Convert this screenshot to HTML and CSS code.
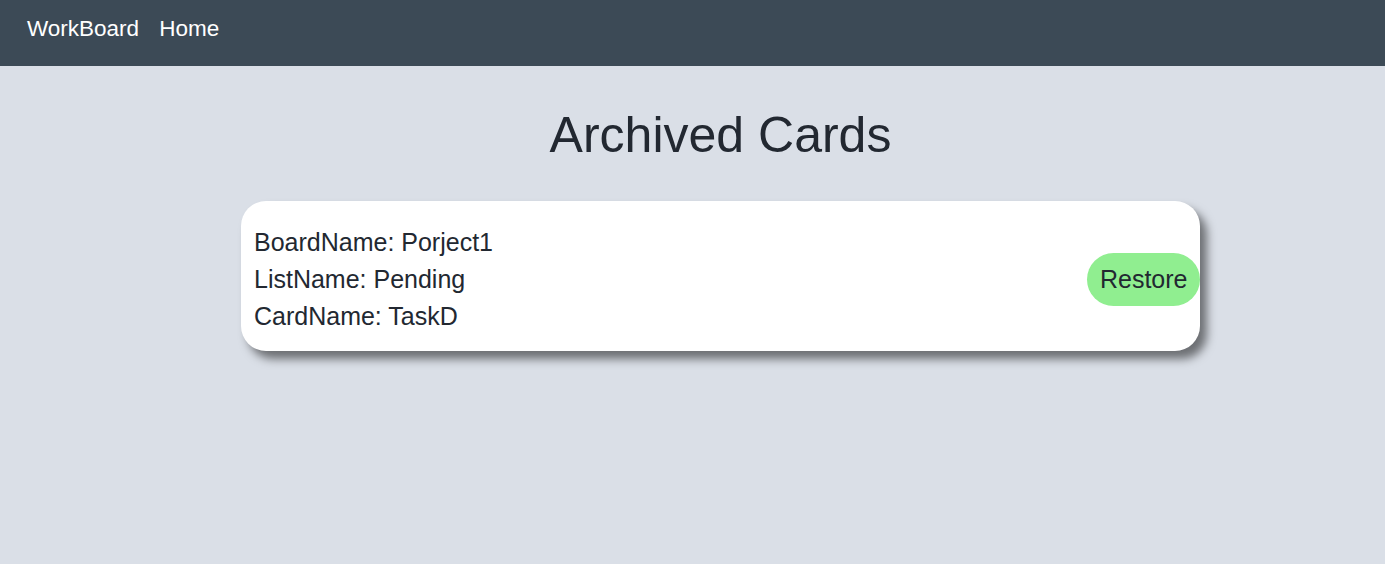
FILE: index.html
```html
<!DOCTYPE html>
<html lang="en">
<head>
<meta charset="utf-8">
<title>Archived Cards</title>
<link rel="stylesheet" href="styles.css">
</head>
<body>
<nav class="navbar">
  <a class="nav-link" href="#">WorkBoard</a>
  <a class="nav-link" href="#">Home</a>
</nav>
<main class="main">
  <h1 class="title">Archived Cards</h1>
  <div class="card">
    <div class="card-info">
      <div class="card-line">BoardName: Porject1</div>
      <div class="card-line">ListName: Pending</div>
      <div class="card-line">CardName: TaskD</div>
    </div>
    <button class="restore-btn" type="button">Restore</button>
  </div>
</main>
</body>
</html>
```
FILE: styles.css
```css
html, body {
  margin: 0;
  padding: 0;
}
body {
  background: #dadfe7;
  font-family: "Liberation Sans", Arial, sans-serif;
  color: #222831;
  min-height: 564px;
}
.navbar {
  box-sizing: border-box;
  height: 66px;
  background: #3c4a56;
  display: flex;
  align-items: flex-start;
  gap: 20px;
  padding: 16px 27px 0;
}
.nav-link {
  color: #ffffff;
  text-decoration: none;
  font-size: 22.5px;
  line-height: normal;
}
.main {
  margin-left: 56px;
  display: flex;
  flex-direction: column;
  align-items: center;
}
.title {
  font-size: 50px;
  font-weight: normal;
  line-height: normal;
  margin: 40px 0 37px;
  color: #222831;
}
.card {
  box-sizing: border-box;
  width: 959px;
  height: 150px;
  background: #ffffff;
  border-radius: 25px;
  box-shadow: 7px 8px 10px rgba(0, 0, 0, 0.5);
  display: flex;
  align-items: center;
  justify-content: space-between;
  padding: 22px 0 15px 13px;
}
.card-line {
  font-size: 25px;
  line-height: 37px;
}
.restore-btn {
  font-family: "Liberation Sans", Arial, sans-serif;
  font-size: 25px;
  line-height: normal;
  color: #222831;
  background: #90ee90;
  border: none;
  border-radius: 30px;
  padding: 12px 12.5px;
  cursor: pointer;
}
```
